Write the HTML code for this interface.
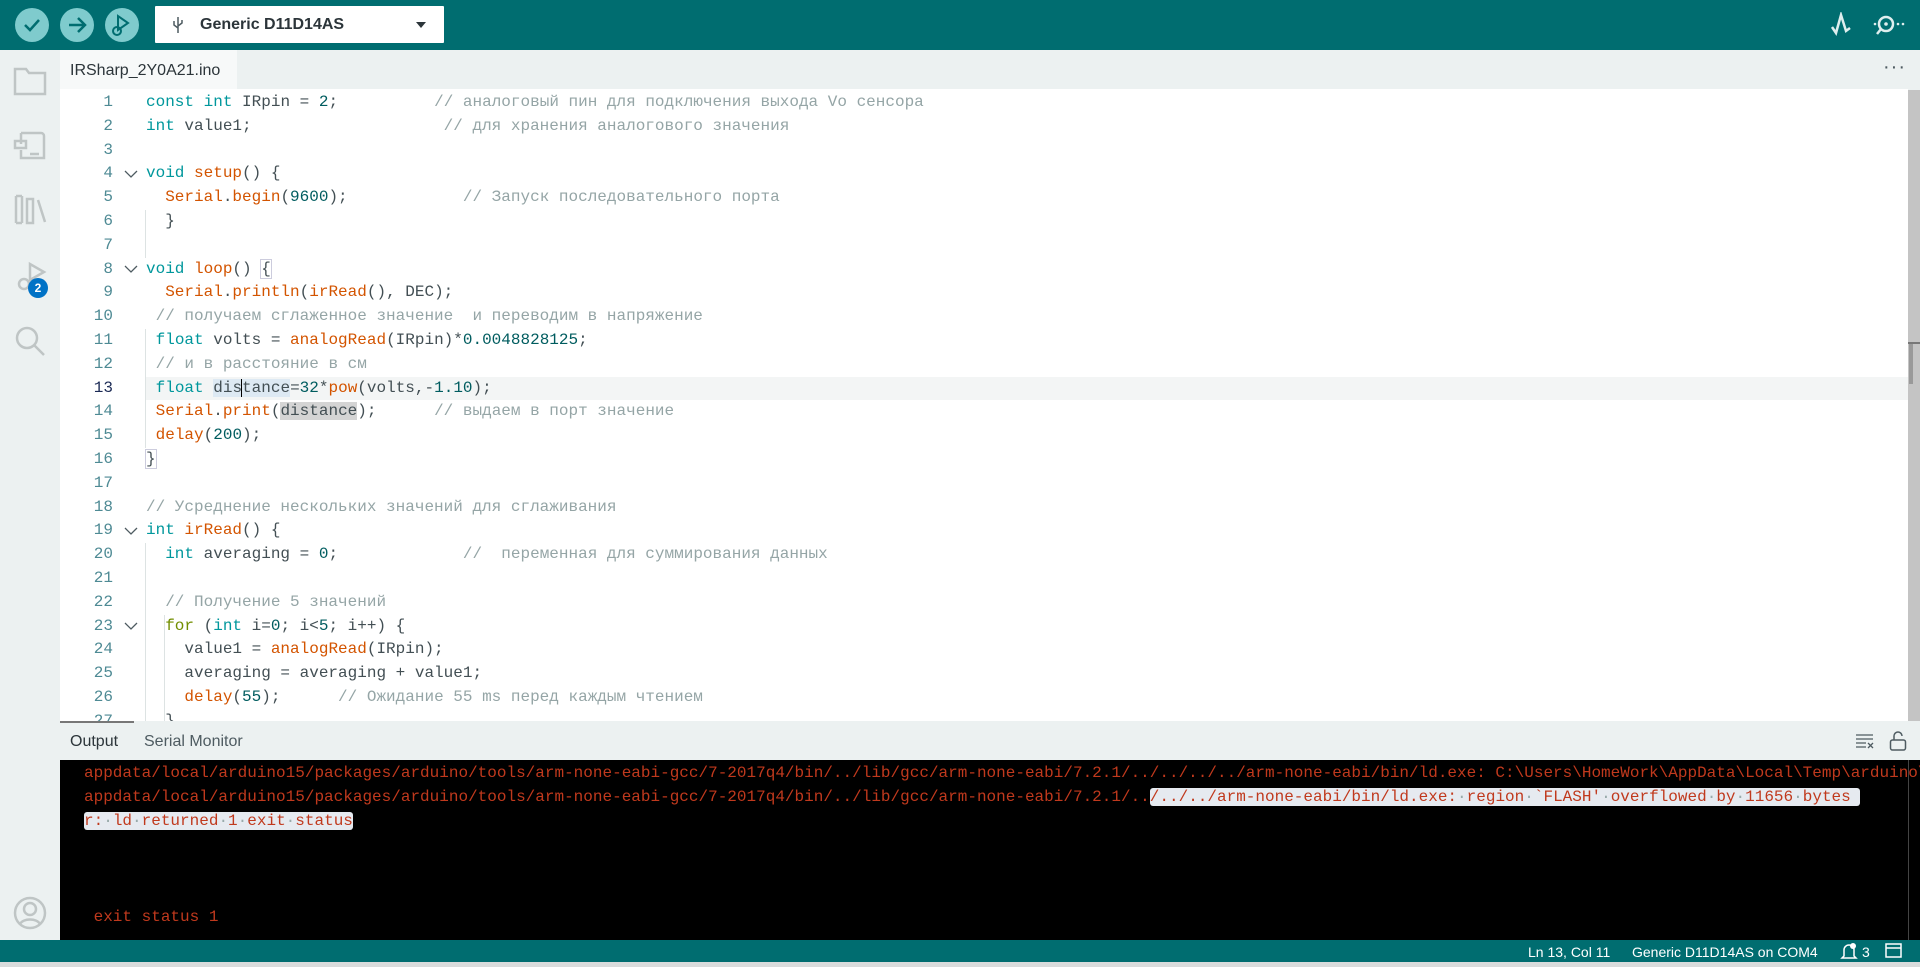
<!DOCTYPE html>
<html><head><meta charset="utf-8"><style>
*{margin:0;padding:0;box-sizing:border-box}
body{width:1920px;height:967px;overflow:hidden;background:#fff;font-family:"Liberation Sans",sans-serif;position:relative}
.top{position:absolute;left:0;top:0;width:1920px;height:50px;background:#006d70}
.btn{position:absolute;top:8px;width:34px;height:34px;border-radius:50%;background:#7fcbcd}
.board{position:absolute;left:155px;top:6px;width:289px;height:37px;background:#fff;border-radius:1px}
.board span{position:absolute;left:45px;top:10px;font-size:16px;font-weight:bold;color:#2c353a}
.side{position:absolute;left:0;top:50px;width:60px;height:890px;background:#ecf1f1}
.tabbar{position:absolute;left:60px;top:50px;width:1860px;height:40px;background:#ecf1f1}
.tab{position:absolute;left:0;top:0;width:177px;height:40px;background:#f7f9f9;font-size:16px;color:#2c353a;padding:12px 0 0 10px}
.code{position:absolute;left:60px;top:89px;width:1848px;height:632px;overflow:hidden;background:#fff}
.ln{position:absolute;left:0;top:2px;width:53px;text-align:right;font:16px/23.8px "Liberation Mono",monospace;color:#4e8a94}
.fold{position:absolute;left:64px}
pre{position:absolute;left:86px;top:2px;font:16px/23.8px "Liberation Mono","DejaVu Sans Mono",monospace;color:#434f54}
.k{color:#00979c}.f{color:#d35400}.n{color:#005c5f}.c{color:#95a5a6}.o{color:#728e00}
.hl{position:absolute;left:85px;top:287.6px;width:1763px;height:23.8px;background:#f3f5f5}
.guide{position:absolute;left:85px;width:1px;background:#dde3e3}
.scroll{position:absolute;left:1908px;top:90px;width:12px;height:631px;background:#c4c4c4}
.ohead{position:absolute;left:60px;top:721px;width:1860px;height:39px;background:#ecf1f1;font-size:16px;color:#4e5b61}
.out{position:absolute;left:60px;top:760px;width:1860px;height:180px;background:#000;overflow:hidden}
.out pre{left:24px;top:1px;color:#c0391d;line-height:24px}
.sel{background:#e6eaf0;border-radius:3px}
.dot{color:#9aa}
.status{position:absolute;left:0;top:940px;width:1920px;height:22px;background:#006d70;color:#fff;font-size:14px}
.status span{position:absolute;top:4px}
.bot{position:absolute;left:0;top:962px;width:1920px;height:5px;background:#d9dcdc}
</style></head><body>
<div class="top">
 <div class="btn" style="left:15px"><svg width="34" height="34"><path d="M10 17l5 5 9-10" stroke="#006d70" stroke-width="2.5" fill="none"/></svg></div>
 <div class="btn" style="left:60px"><svg width="34" height="34"><path d="M9 17h15M18 10l7 7-7 7" stroke="#006d70" stroke-width="2.5" fill="none"/></svg></div>
 <div class="btn" style="left:105px"><svg width="34" height="34"><path d="M13 8v14l10-7z" stroke="#006d70" stroke-width="2" fill="none"/><circle cx="12" cy="23" r="4" stroke="#006d70" stroke-width="2" fill="none"/></svg></div>
 <div class="board"><svg style="position:absolute;left:16px;top:9px" width="14" height="20"><path d="M7 2v16M7 13l-4-3V6M7 11l4-3V5" stroke="#4e5b61" stroke-width="1.5" fill="none"/></svg><span>Generic D11D14AS</span><svg style="position:absolute;left:260px;top:15px" width="12" height="8"><path d="M1 1h10L6 7z" fill="#2c353a"/></svg></div>
 <svg style="position:absolute;left:1830px;top:12px" width="22" height="26"><path d="M2 15l4 6 5-18 5 16 4-3" stroke="#dfeeee" stroke-width="2.5" fill="none"/></svg>
 <svg style="position:absolute;left:1870px;top:12px" width="36" height="26"><circle cx="16" cy="12" r="7" stroke="#dfeeee" stroke-width="2.5" fill="none"/><circle cx="16" cy="12" r="1.8" fill="#dfeeee"/><path d="M11 17l-4 5" stroke="#dfeeee" stroke-width="2.5"/><circle cx="5" cy="12" r="1.3" fill="#dfeeee"/><circle cx="28" cy="12" r="1.3" fill="#dfeeee"/><circle cx="33" cy="12" r="1.3" fill="#dfeeee"/></svg>
</div>
<div class="side">
 <svg style="position:absolute;left:13px;top:16px" width="34" height="30"><path d="M2 3h11l3 4h16v21H2z" stroke="#bfc5c5" stroke-width="2.5" fill="none"/></svg>
 <svg style="position:absolute;left:13px;top:80px" width="34" height="32"><path d="M8 3h20a3 3 0 013 3v22H8v-8M8 14V3" stroke="#bfc5c5" stroke-width="2.5" fill="none"/><rect x="2" y="11" width="11" height="7" stroke="#bfc5c5" stroke-width="2.5" fill="none"/><path d="M17 24h9" stroke="#bfc5c5" stroke-width="2.5"/></svg>
 <svg style="position:absolute;left:13px;top:142px" width="34" height="34"><path d="M3 4v27M9 4v27M3 4h6M3 31h6M14 7v24h6V7zM25 8l7 22" stroke="#bfc5c5" stroke-width="2.5" fill="none"/></svg>
 <svg style="position:absolute;left:13px;top:210px" width="34" height="34"><path d="M17 4v16l14-8z" stroke="#bfc5c5" stroke-width="2.5" fill="none"/><circle cx="11" cy="24" r="5" stroke="#bfc5c5" stroke-width="2.5" fill="none"/></svg>
 <div style="position:absolute;left:28px;top:228px;width:20px;height:20px;border-radius:50%;background:#0072c6;color:#fff;font:bold 12px/20px 'Liberation Sans';text-align:center">2</div>
 <svg style="position:absolute;left:13px;top:274px" width="34" height="34"><circle cx="14" cy="14" r="10" stroke="#bfc5c5" stroke-width="2.5" fill="none"/><path d="M21 21l10 10" stroke="#bfc5c5" stroke-width="2.5"/></svg>
 <svg style="position:absolute;left:13px;top:846px" width="34" height="34"><circle cx="17" cy="17" r="15" stroke="#bfc5c5" stroke-width="2.5" fill="none"/><circle cx="17" cy="13" r="6" stroke="#bfc5c5" stroke-width="2.5" fill="none"/><path d="M7 28c3-6 17-6 20 0" stroke="#bfc5c5" stroke-width="2.5" fill="none"/></svg>
</div>
<div class="tabbar"><div class="tab">IRSharp_2Y0A21.ino</div><span style="position:absolute;left:1823px;top:6px;font-size:20px;color:#4e5b61;letter-spacing:1px">···</span></div>
<div class="code">
 <div class="hl"></div>
 <div class="guide" style="top:121px;height:48px"></div>
 <div class="guide" style="top:240px;height:119px"></div>
 <div class="guide" style="top:454px;height:180px"></div>
 <div class="guide" style="left:104px;top:526px;height:108px"></div>
 <div class="ln">1<br>2<br>3<br>4<br>5<br>6<br>7<br>8<br>9<br>10<br>11<br>12<br><span style="color:#1b2a55">13</span><br>14<br>15<br>16<br>17<br>18<br>19<br>20<br>21<br>22<br>23<br>24<br>25<br>26<br>27</div>
 <svg class="fold" style="top:81px" width="14" height="8"><path d="M1 1l6 6 6-6" stroke="#4e5b61" stroke-width="1.3" fill="none"/></svg>
 <svg class="fold" style="top:176px" width="14" height="8"><path d="M1 1l6 6 6-6" stroke="#4e5b61" stroke-width="1.3" fill="none"/></svg>
 <svg class="fold" style="top:438px" width="14" height="8"><path d="M1 1l6 6 6-6" stroke="#4e5b61" stroke-width="1.3" fill="none"/></svg>
 <svg class="fold" style="top:533px" width="14" height="8"><path d="M1 1l6 6 6-6" stroke="#4e5b61" stroke-width="1.3" fill="none"/></svg>
<pre><span class="k">const</span> <span class="k">int</span> IRpin = <span class="n">2</span>;          <span class="c">// аналоговый пин для подключения выхода Vo сенсора</span>
<span class="k">int</span> value1;                    <span class="c">// для хранения аналогового значения</span>

<span class="k">void</span> <span class="f">setup</span>() {
  <span class="f">Serial</span>.<span class="f">begin</span>(<span class="n">9600</span>);            <span class="c">// Запуск последовательного порта</span>
  }

<span class="k">void</span> <span class="f">loop</span>() <span style="outline:1px solid #ccd">{</span>
  <span class="f">Serial</span>.<span class="f">println</span>(<span class="f">irRead</span>(), DEC);
 <span class="c">// получаем сглаженное значение  и переводим в напряжение</span>
 <span class="k">float</span> volts = <span class="f">analogRead</span>(IRpin)*<span class="n">0.0048828125</span>;
 <span class="c">// и в расстояние в см</span>
 <span class="k">float</span> <span style="background:#dde9f3">dis</span><span style="border-left:1px solid #000;margin-left:-1px"></span><span style="background:#dde9f3">tance</span>=<span class="n">32</span>*<span class="f">pow</span>(volts,-<span class="n">1.10</span>);
 <span class="f">Serial</span>.<span class="f">print</span>(<span style="background:#d4d4d4">distance</span>);      <span class="c">// выдаем в порт значение</span>
 <span class="f">delay</span>(<span class="n">200</span>);
<span style="outline:1px solid #ccd">}</span>

<span class="c">// Усреднение нескольких значений для сглаживания</span>
<span class="k">int</span> <span class="f">irRead</span>() {
  <span class="k">int</span> averaging = <span class="n">0</span>;             <span class="c">//  переменная для суммирования данных</span>

  <span class="c">// Получение 5 значений</span>
  <span class="o">for</span> (<span class="k">int</span> i=<span class="n">0</span>; i&lt;<span class="n">5</span>; i++) {
    value1 = <span class="f">analogRead</span>(IRpin);
    averaging = averaging + value1;
    <span class="f">delay</span>(<span class="n">55</span>);      <span class="c">// Ожидание 55 ms перед каждым чтением</span>
  }</pre>
</div>
<div class="scroll"><div style="position:absolute;left:0;top:252px;width:12px;height:2px;background:#777"></div><div style="position:absolute;left:1px;top:254px;width:4px;height:40px;background:#999"></div></div>
<div class="ohead"><div style="position:absolute;left:0;top:0;width:74px;height:2px;background:#777"></div><span style="position:absolute;left:10px;top:12px;color:#2c353a">Output</span><span style="position:absolute;left:84px;top:12px">Serial Monitor</span>
<svg style="position:absolute;left:1795px;top:12px" width="20" height="16"><path d="M1 2h17M1 6h17M1 10h10M1 14h10M13 10l5 5M18 10l-5 5" stroke="#4e5b61" stroke-width="1.3"/></svg>
<svg style="position:absolute;left:1829px;top:9px" width="18" height="22"><rect x="1.5" y="10" width="15" height="10" rx="2" stroke="#4e5b61" stroke-width="1.5" fill="none"/><path d="M5 10V6a4 4 0 018 0" stroke="#4e5b61" stroke-width="1.5" fill="none"/></svg></div>
<div class="out"><pre>appdata/local/arduino15/packages/arduino/tools/arm-none-eabi-gcc/7-2017q4/bin/../lib/gcc/arm-none-eabi/7.2.1/../../../../arm-none-eabi/bin/ld.exe: C:\Users\HomeWork\AppData\Local\Temp\arduino\sketches
appdata/local/arduino15/packages/arduino/tools/arm-none-eabi-gcc/7-2017q4/bin/../lib/gcc/arm-none-eabi/7.2.1/..<span class="sel">/../../arm-none-eabi/bin/ld.exe:<span class="dot">·</span>region<span class="dot">·</span>`FLASH'<span class="dot">·</span>overflowed<span class="dot">·</span>by<span class="dot">·</span>11656<span class="dot">·</span>bytes </span>
<span class="sel">r:<span class="dot">·</span>ld<span class="dot">·</span>returned<span class="dot">·</span>1<span class="dot">·</span>exit<span class="dot">·</span>status</span>



 exit status 1</pre><div style="position:absolute;left:1848px;top:0;width:1px;height:180px;background:#444"></div></div>
<div class="status"><span style="left:1528px">Ln 13, Col 11</span><span style="left:1632px">Generic D11D14AS on COM4</span>
<svg style="position:absolute;left:1840px;top:3px" width="18" height="16"><path d="M4 13V7a5 5 0 0110 0v6l2 2H2z" stroke="#fff" stroke-width="1.5" fill="none"/><circle cx="13" cy="3" r="3" fill="#fff"/></svg><span style="left:1862px">3</span>
<svg style="position:absolute;left:1885px;top:3px" width="17" height="16"><rect x="1" y="1" width="15" height="13" stroke="#fff" stroke-width="1.5" fill="none"/><path d="M1 5h15" stroke="#fff" stroke-width="1.5"/></svg></div>
<div class="bot"></div>
</body></html>
